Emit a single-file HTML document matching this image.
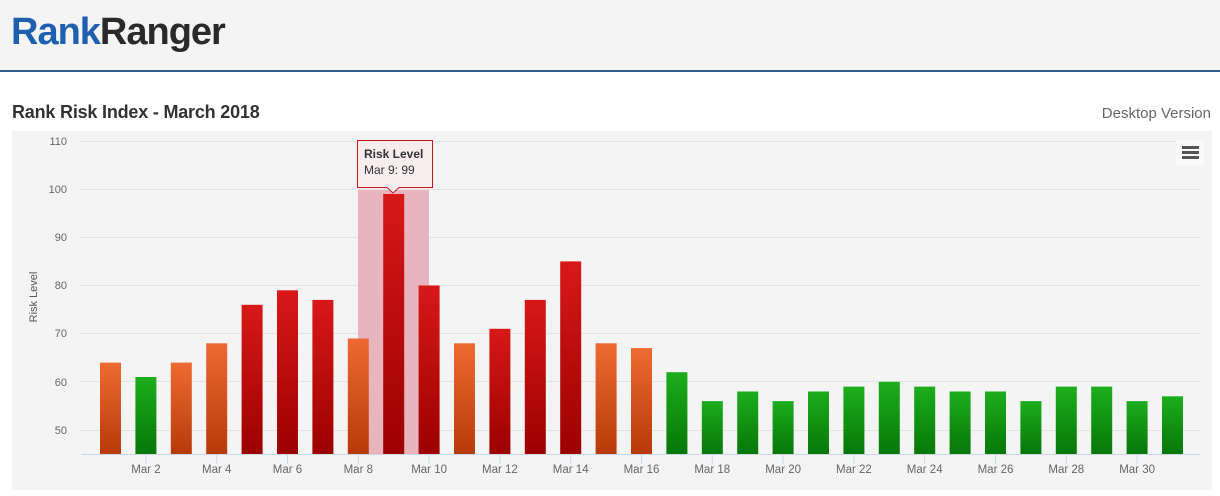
<!DOCTYPE html>
<html><head><meta charset="utf-8"><style>
body{margin:0;width:1220px;height:496px;background:#fff;overflow:hidden;font-family:"Liberation Sans",sans-serif}
.hdr{position:absolute;left:0;top:0;width:1220px;height:70px;background:#f4f4f4;border-bottom:2px solid #2f5b84}
.logo{position:absolute;left:11px;top:11px;font-size:38px;font-weight:bold;letter-spacing:-1px;color:#2a2a2a}
.logo span{color:#1f5fb0}
.title{position:absolute;left:12px;top:102px;font-size:18px;font-weight:bold;color:#333;letter-spacing:-0.2px}
.dv{position:absolute;right:9px;top:105px;font-size:15px;color:#666}
</style></head><body>
<div class="hdr"><div class="logo"><span>Rank</span>Ranger</div></div>
<div class="title">Rank Risk Index - March 2018</div>
<div class="dv">Desktop Version</div>
<svg width="1220" height="496" style="position:absolute;left:0;top:0" font-family="Liberation Sans, sans-serif">
<defs>
<linearGradient id="r" x1="0" y1="0" x2="0" y2="1"><stop offset="0" stop-color="#d81818"/><stop offset="1" stop-color="#9c0000"/></linearGradient>
<linearGradient id="o" x1="0" y1="0" x2="0" y2="1"><stop offset="0" stop-color="#ee6a32"/><stop offset="1" stop-color="#b83a08"/></linearGradient>
<linearGradient id="g" x1="0" y1="0" x2="0" y2="1"><stop offset="0" stop-color="#1cae1c"/><stop offset="1" stop-color="#077707"/></linearGradient>
</defs>
<rect x="12" y="131" width="1200" height="359" fill="#f4f4f4"/>
<g stroke="#e2e2e2" stroke-width="1">
<line x1="81" y1="141.5" x2="1200" y2="141.5"/><line x1="81" y1="189.5" x2="1200" y2="189.5"/>
<line x1="81" y1="237.5" x2="1200" y2="237.5"/><line x1="81" y1="285.5" x2="1200" y2="285.5"/>
<line x1="81" y1="333.5" x2="1200" y2="333.5"/><line x1="81" y1="381.5" x2="1200" y2="381.5"/>
<line x1="81" y1="430.5" x2="1200" y2="430.5"/></g>
<g font-size="11" fill="#666" text-anchor="end">
<text x="67" y="145">110</text><text x="67" y="193">100</text><text x="67" y="241">90</text>
<text x="67" y="289">80</text><text x="67" y="337">70</text><text x="67" y="386">60</text><text x="67" y="434">50</text></g>
<text transform="translate(37,297) rotate(-90)" font-size="11" fill="#555" text-anchor="middle">Risk Level</text>
<rect x="358" y="190" width="71" height="264" fill="#e8b4bd"/>
<g>
<rect x="100" y="362.6" width="21" height="91.4" fill="url(#o)"/>
<rect x="135.4" y="377" width="21" height="77" fill="url(#g)"/>
<rect x="170.8" y="362.6" width="21" height="91.4" fill="url(#o)"/>
<rect x="206.2" y="343.3" width="21" height="110.7" fill="url(#o)"/>
<rect x="241.6" y="304.8" width="21" height="149.2" fill="url(#r)"/>
<rect x="277" y="290.3" width="21" height="163.7" fill="url(#r)"/>
<rect x="312.4" y="299.9" width="21" height="154.1" fill="url(#r)"/>
<rect x="347.8" y="338.5" width="21" height="115.5" fill="url(#o)"/>
<rect x="383.2" y="194" width="21" height="260" fill="url(#r)"/>
<rect x="418.6" y="285.5" width="21" height="168.5" fill="url(#r)"/>
<rect x="454" y="343.3" width="21" height="110.7" fill="url(#o)"/>
<rect x="489.4" y="328.8" width="21" height="125.2" fill="url(#r)"/>
<rect x="524.8" y="299.9" width="21" height="154.1" fill="url(#r)"/>
<rect x="560.2" y="261.4" width="21" height="192.6" fill="url(#r)"/>
<rect x="595.6" y="343.3" width="21" height="110.7" fill="url(#o)"/>
<rect x="631" y="348.1" width="21" height="105.9" fill="url(#o)"/>
<rect x="666.4" y="372.2" width="21" height="81.8" fill="url(#g)"/>
<rect x="701.8" y="401.1" width="21" height="52.9" fill="url(#g)"/>
<rect x="737.2" y="391.5" width="21" height="62.5" fill="url(#g)"/>
<rect x="772.6" y="401.1" width="21" height="52.9" fill="url(#g)"/>
<rect x="808" y="391.5" width="21" height="62.5" fill="url(#g)"/>
<rect x="843.4" y="386.6" width="21" height="67.4" fill="url(#g)"/>
<rect x="878.8" y="381.8" width="21" height="72.2" fill="url(#g)"/>
<rect x="914.2" y="386.6" width="21" height="67.4" fill="url(#g)"/>
<rect x="949.6" y="391.5" width="21" height="62.5" fill="url(#g)"/>
<rect x="985" y="391.5" width="21" height="62.5" fill="url(#g)"/>
<rect x="1020.4" y="401.1" width="21" height="52.9" fill="url(#g)"/>
<rect x="1055.8" y="386.6" width="21" height="67.4" fill="url(#g)"/>
<rect x="1091.2" y="386.6" width="21" height="67.4" fill="url(#g)"/>
<rect x="1126.6" y="401.1" width="21" height="52.9" fill="url(#g)"/>
<rect x="1162" y="396.3" width="21" height="57.7" fill="url(#g)"/>
</g>
<line x1="81" y1="454.5" x2="1200" y2="454.5" stroke="#ccd6eb"/>
<g stroke="#ccd6eb"><line x1="146" y1="454" x2="146" y2="464"/><line x1="216.7" y1="454" x2="216.7" y2="464"/><line x1="287.5" y1="454" x2="287.5" y2="464"/><line x1="358.3" y1="454" x2="358.3" y2="464"/><line x1="429.1" y1="454" x2="429.1" y2="464"/><line x1="499.9" y1="454" x2="499.9" y2="464"/><line x1="570.7" y1="454" x2="570.7" y2="464"/><line x1="641.5" y1="454" x2="641.5" y2="464"/><line x1="712.3" y1="454" x2="712.3" y2="464"/><line x1="783.1" y1="454" x2="783.1" y2="464"/><line x1="853.9" y1="454" x2="853.9" y2="464"/><line x1="924.7" y1="454" x2="924.7" y2="464"/><line x1="995.5" y1="454" x2="995.5" y2="464"/><line x1="1066.3" y1="454" x2="1066.3" y2="464"/><line x1="1137.1" y1="454" x2="1137.1" y2="464"/></g>
<g font-size="11.5" fill="#666" text-anchor="middle">
<text x="146" y="473">Mar 2</text><text x="216.7" y="473">Mar 4</text><text x="287.5" y="473">Mar 6</text><text x="358.3" y="473">Mar 8</text><text x="429.1" y="473">Mar 10</text><text x="499.9" y="473">Mar 12</text><text x="570.7" y="473">Mar 14</text><text x="641.5" y="473">Mar 16</text><text x="712.3" y="473">Mar 18</text><text x="783.1" y="473">Mar 20</text><text x="853.9" y="473">Mar 22</text><text x="924.7" y="473">Mar 24</text><text x="995.5" y="473">Mar 26</text><text x="1066.3" y="473">Mar 28</text><text x="1137.1" y="473">Mar 30</text></g>
<path d="M357.5 140.5 H432.5 V187.5 H399 L393 193 L387 187.5 H357.5 Z" fill="#f7ecee" stroke="#c8151a" stroke-width="1"/>
<text x="364" y="158" font-size="12" font-weight="bold" fill="#333">Risk Level</text>
<text x="364" y="174" font-size="12" fill="#333">Mar 9: 99</text>
<rect x="1176" y="140" width="28" height="26" fill="#fafafa" rx="2"/>
<g stroke="#555" stroke-width="3"><line x1="1182" y1="147.5" x2="1199" y2="147.5"/><line x1="1182" y1="152.5" x2="1199" y2="152.5"/><line x1="1182" y1="157.5" x2="1199" y2="157.5"/></g>
</svg>
</body></html>
